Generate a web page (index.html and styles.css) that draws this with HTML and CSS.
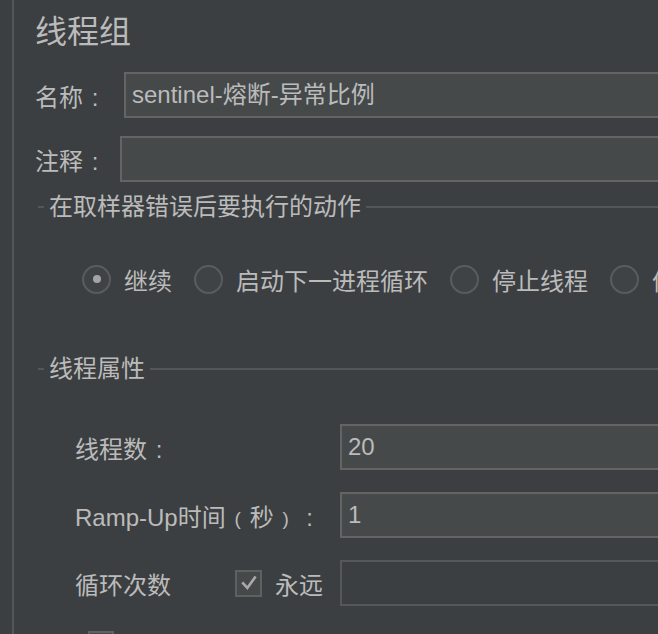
FILE: index.html
```html
<!DOCTYPE html>
<html lang="zh">
<head>
<meta charset="utf-8">
<title>线程组</title>
<link rel="stylesheet" href="styles.css">
</head>
<body>
<div class="panel">
  <div class="title">线程组</div>

  <div class="field-row name-row">
    <span class="field-label">名称<span class="fw">:</span></span>
    <div class="text-input">sentinel-熔断-异常比例</div>
  </div>

  <div class="field-row comment-row">
    <span class="field-label">注释<span class="fw">:</span></span>
    <div class="text-input"></div>
  </div>

  <div class="section-head error-head">
    <span class="dash"></span>
    <span class="section-title">在取样器错误后要执行的动作</span>
    <span class="rule"></span>
  </div>

  <div class="radio-row">
    <label class="radio-item"><span class="radio checked"></span><span>继续</span></label>
    <label class="radio-item"><span class="radio"></span><span>启动下一进程循环</span></label>
    <label class="radio-item"><span class="radio"></span><span>停止线程</span></label>
    <label class="radio-item"><span class="radio"></span><span>停止测试</span></label>
  </div>

  <div class="section-head props-head">
    <span class="dash"></span>
    <span class="section-title">线程属性</span>
    <span class="rule"></span>
  </div>

  <div class="props">
    <span class="prop-label">线程数<span class="fw">:</span></span>
    <div class="text-input">20</div>

    <span class="prop-label">Ramp-Up时间<span class="fw paren">(</span>秒<span class="fw paren">)</span><span class="fw">:</span></span>
    <div class="text-input">1</div>

    <span class="prop-label loop-label">
      <span>循环次数</span>
      <span class="checkbox checked">
        <svg viewBox="0 0 24 24" width="20" height="20"><path d="M5 12.5 L10 18 L19 5.5" fill="none" stroke="#a9a9a9" stroke-width="3.2" stroke-linecap="square"/></svg>
      </span>
      <span class="forever">永远</span>
    </span>
    <div class="text-input disabled"></div>
  </div>

  <div class="bottom-row">
    <span class="checkbox"></span>
  </div>
</div>
</body>
</html>
```

FILE: styles.css
```css
html, body {
  margin: 0;
  padding: 0;
  width: 658px;
  height: 634px;
  overflow: hidden;
  background: #3c3f41;
}

body {
  font-family: "Liberation Sans", "Noto Sans CJK SC", sans-serif;
  font-size: 24px;
  color: #bbbbbb;
}

.panel {
  margin-left: 12px;
  border-left: 2px solid #535556;
  padding-left: 21px;
  height: 634px;
  width: 900px;
  overflow: hidden;
}

.title {
  font-size: 32px;
  line-height: 36px;
  padding-top: 14px;
}

.field-row {
  display: flex;
  align-items: center;
}

.name-row {
  margin-top: 22px;
}

.comment-row {
  margin-top: 18px;
}

.field-label {
  white-space: nowrap;
}

.fw {
  display: inline-block;
  width: 24px;
  text-align: center;
}

.fw.paren {
  font-size: 19px;
  vertical-align: 1px;
}

.name-row .field-label {
  width: 89px;
}

.comment-row .field-label {
  width: 85px;
}

.text-input {
  flex: 1;
  box-sizing: border-box;
  height: 46px;
  border: 2px solid #646464;
  background: #45494a;
  padding-left: 6px;
  line-height: 42px;
  white-space: nowrap;
  color: #bbbbbb;
}

.text-input.disabled {
  background: #3c3f41;
  border-color: #555758;
}

.section-head {
  display: flex;
  align-items: center;
  height: 28px;
  margin-left: 3px;
}

.error-head {
  margin-top: 11px;
}

.props-head {
  margin-top: 61px;
}

.dash {
  width: 6px;
  height: 2px;
  background: #545657;
}

.section-title {
  padding: 0 5px;
  line-height: 28px;
  white-space: nowrap;
}

.rule {
  flex: 1;
  height: 2px;
  background: #545657;
}

.radio-row {
  display: flex;
  align-items: center;
  gap: 22px;
  margin-top: 43px;
  padding-left: 47px;
  height: 30px;
  white-space: nowrap;
}

.radio-item {
  display: flex;
  align-items: center;
  gap: 13px;
}

.radio {
  box-sizing: border-box;
  width: 29px;
  height: 29px;
  border-radius: 50%;
  border: 2px solid #5a5d5e;
  background: #3f4345;
  display: flex;
  align-items: center;
  justify-content: center;
}

.radio.checked::after {
  content: "";
  width: 8px;
  height: 8px;
  border-radius: 50%;
  background: #a4a4a4;
}

.props {
  display: grid;
  grid-template-columns: 265px 1fr;
  row-gap: 22px;
  align-items: center;
  margin-top: 41px;
  padding-left: 40px;
}

.prop-label {
  white-space: nowrap;
}

.loop-label {
  display: flex;
  align-items: center;
}

.checkbox {
  box-sizing: border-box;
  width: 27px;
  height: 27px;
  border: 2px solid #5e6061;
  background: #45494a;
  display: inline-flex;
  align-items: center;
  justify-content: center;
}

.loop-label .checkbox {
  margin-left: 64px;
}

.forever {
  margin-left: 13px;
}

.bottom-row {
  margin-top: 25px;
  padding-left: 53px;
  display: flex;
}

.bottom-row .checkbox {
  width: 26px;
}
```
